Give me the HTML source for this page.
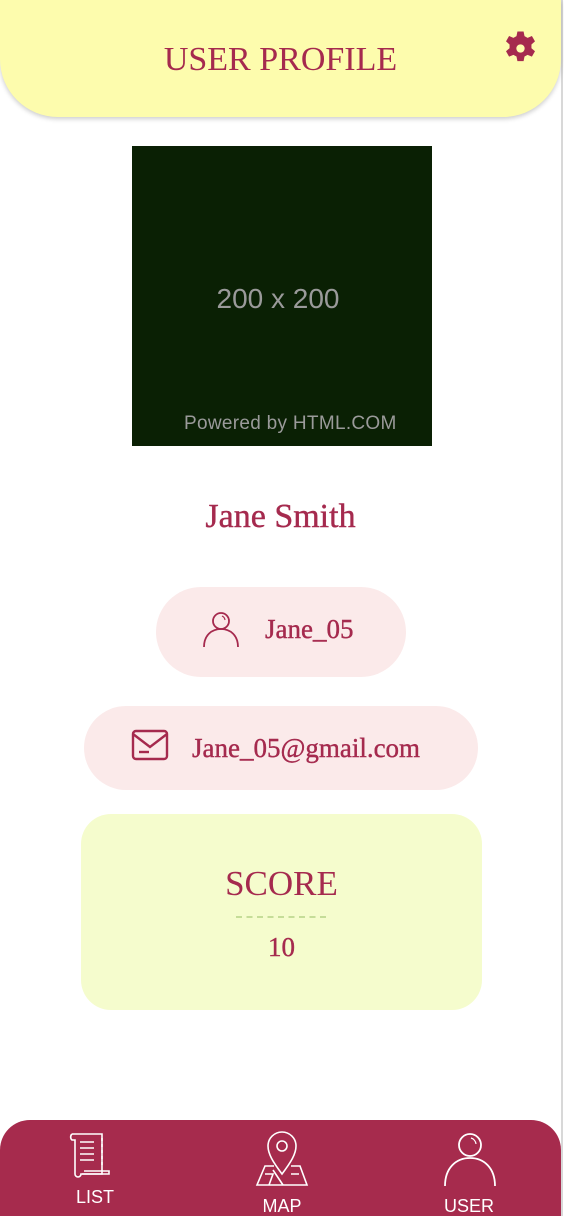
<!DOCTYPE html>
<html><head><meta charset="utf-8"><style>
*{margin:0;padding:0;box-sizing:border-box}
body{width:564px;height:1216px;background:#fff;position:relative;overflow:hidden;font-family:"Liberation Serif",serif;color:#a52a4e}
.vl{position:absolute;left:561px;top:0;width:2px;height:1216px;background:#d8d8d8}
.hdr{position:absolute;left:0;top:0;width:561px;height:117px;background:#fdfcad;border-radius:0 0 58px 58px;box-shadow:0 2px 5px rgba(0,0,0,.2)}
.hdr h1{position:absolute;left:0;width:561px;top:41px;text-align:center;font-weight:normal;font-size:34px}
.img{position:absolute;left:132px;top:146px;width:300px;height:300px;background:#0a2004;font-family:"Liberation Sans",sans-serif;color:#9a9a9a}
.abs{position:absolute}
.pill{position:absolute;background:#fbeaea;border-radius:46px}
.t{font-family:"Liberation Serif",serif;font-size:27px;-webkit-text-stroke:.4px #a52a4e}
.nav{position:absolute;left:0;top:1120px;width:561px;height:96px;background:#a62b4d;border-radius:30px 30px 0 0}
.nav span{position:absolute;color:#fff;font-family:"Liberation Sans",sans-serif;font-size:18px;font-weight:500;transform:translateX(-50%)}
</style></head><body>
<div class="vl"></div>
<div class="hdr"><h1>USER PROFILE</h1>
<svg class="abs" style="left:502px;top:30px" width="37" height="37" viewBox="0 0 24 24"><path fill="#a52a4e" fill-rule="evenodd" d="M10 1h4l.6 3 2 1.1 2.8-1.2 2 3.5-2.3 2v2.4l2.3 2-2 3.5-2.8-1.2-2 1.1-.6 3h-4l-.6-3-2-1.1-2.8 1.2-2-3.5 2.3-2v-2.4l-2.3-2 2-3.5 2.8 1.2 2-1.1zM12 9.3a2.7 2.7 0 1 0 0 5.4a2.7 2.7 0 1 0 0-5.4z"/></svg>
</div>
<div class="img">
<div class="abs" style="left:0;width:292px;top:137px;text-align:center;font-size:28px">200 x 200</div>
<div class="abs" style="left:52px;top:267px;font-size:19px;letter-spacing:.3px">Powered by HTML.COM</div>
</div>
<div class="abs" style="left:0;width:561px;top:498px;text-align:center;font-size:34px;-webkit-text-stroke:.4px #a52a4e">Jane Smith</div>
<div class="pill" style="left:156px;top:587px;width:250px;height:90px"></div>
<svg class="abs" style="left:202px;top:609px" width="38" height="40" viewBox="0 0 38 40" fill="none" stroke="#a52a4e" stroke-width="1.8"><circle cx="19" cy="12" r="8"/><path d="M2 38c0-12 8-18 17-18s17 6 17 18"/><path d="M20 7a5 5 0 0 1 3 4" stroke-width="1.2"/></svg>
<div class="abs t" style="left:265px;top:614px">Jane_05</div>
<div class="pill" style="left:84px;top:706px;width:394px;height:84px"></div>
<svg class="abs" style="left:131px;top:729px" width="38" height="32" viewBox="0 0 38 32" fill="none" stroke="#a52a4e" stroke-width="2.4"><rect x="2" y="2" width="34" height="28" rx="3"/><path d="M2 5l17 13 17-13"/><path d="M8 23h10"/></svg>
<div class="abs t" style="left:192px;top:733px">Jane_05@gmail.com</div>
<div class="abs" style="left:81px;top:814px;width:401px;height:196px;background:#f5fccd;border-radius:30px"></div>
<div class="abs" style="left:81px;width:401px;top:864px;text-align:center;font-size:35px">SCORE</div>
<div class="abs" style="left:236px;top:916px;width:90px;height:0;border-top:2px dashed #c5dd98"></div>
<div class="abs" style="left:81px;width:401px;top:932px;text-align:center;font-size:27px;-webkit-text-stroke:.4px #a52a4e">10</div>
<div class="nav">
<svg class="abs" style="left:62px;top:10px" width="54" height="48" viewBox="0 0 54 48" fill="none" stroke="#fff" stroke-width="1.6"><path d="M10 4h30v40H20"/><path d="M10 4a4 4 0 0 0 0 6h3v34a3 3 0 0 0 6 0h28v-3H22"/><path d="M18 12h14M18 18h14M18 24h14M18 30h14"/><path d="M40 8v30" stroke-dasharray="3 3"/></svg>
<span style="left:95px;top:67px">LIST</span>
<svg class="abs" style="left:255px;top:10px" width="54" height="58" viewBox="0 0 54 58" fill="none" stroke="#fff" stroke-width="1.6"><path d="M27 44C18 32 13 24 13 16a14 14 0 0 1 28 0c0 8-5 16-14 28z"/><circle cx="27" cy="16" r="5"/><path d="M19 36h-9L2 55h50l-7-19h-9"/><path d="M10 44h8l-4 11M18 40l10 15M36 44l8 0"/></svg>
<span style="left:282px;top:76px">MAP</span>
<svg class="abs" style="left:443px;top:10px" width="54" height="58" viewBox="0 0 54 58" fill="none" stroke="#fff" stroke-width="1.8"><circle cx="27" cy="15" r="11"/><path d="M2 56c0-18 11-28 25-28s25 10 25 28"/><path d="M28 8a7 7 0 0 1 5 6" stroke-width="1.2"/></svg>
<span style="left:469px;top:76px">USER</span>
</div>
</body></html>
